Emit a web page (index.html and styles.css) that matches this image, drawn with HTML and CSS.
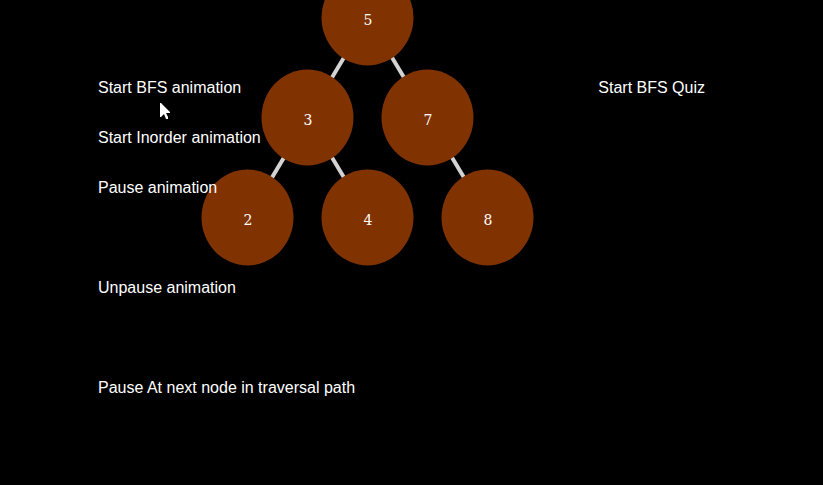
FILE: index.html
```html
<!DOCTYPE html>
<html lang="en">
<head>
<meta charset="utf-8">
<title>Tree traversal</title>
<link rel="stylesheet" href="styles.css">
</head>
<body>
<main class="stage">
  <svg class="tree" width="560" height="280" role="img" aria-label="Binary search tree">
    <g class="edges">
      <line x1="368" y1="17.5" x2="308" y2="117.5"/>
      <line x1="368" y1="17.5" x2="428" y2="117.5"/>
      <line x1="308" y1="117.5" x2="248" y2="217.5"/>
      <line x1="308" y1="117.5" x2="368" y2="217.5"/>
      <line x1="428" y1="117.5" x2="488" y2="217.5"/>
    </g>
    <g class="nodes">
      <ellipse cx="367.5" cy="17.5" rx="46" ry="48"/>
      <ellipse cx="307.5" cy="117.5" rx="46" ry="48"/>
      <ellipse cx="427.5" cy="117.5" rx="46" ry="48"/>
      <ellipse cx="247.5" cy="217.5" rx="46" ry="48"/>
      <ellipse cx="367.5" cy="217.5" rx="46" ry="48"/>
      <ellipse cx="487.5" cy="217.5" rx="46" ry="48"/>
    </g>
    <g class="keys">
      <text x="368" y="25">5</text>
      <text x="308" y="125">3</text>
      <text x="428" y="125">7</text>
      <text x="248" y="225">2</text>
      <text x="368" y="225">4</text>
      <text x="488" y="225">8</text>
    </g>
  </svg>
  <div class="controls">
    <div class="group">
      <button type="button">Start BFS animation</button>
      <button type="button">Start Inorder animation</button>
      <button type="button">Pause animation</button>
      <button type="button" class="spaced">Unpause animation</button>
      <button type="button" class="spaced">Pause At next node in traversal path</button>
    </div>
    <div class="group">
      <button type="button">Start BFS Quiz</button>
    </div>
  </div>
  <svg class="pointer" width="12" height="18" viewBox="0 0 12 18" aria-hidden="true">
    <path d="M0 0V14H1L4 11L6 16H8V14L6 10H10V9L1 0Z"/>
  </svg>
</main>
</body>
</html>
```
FILE: styles.css
```css
body {
  margin: 0;
  background: #000;
  color: #fff;
  font-family: "Liberation Sans", Arial, sans-serif;
}

.stage {
  position: relative;
  min-height: 100vh;
  overflow: hidden;
}

.tree {
  position: absolute;
  top: 0;
  left: 0;
}

.edges {
  stroke: #d3d3d3;
  stroke-width: 4;
}

.nodes {
  fill: #803300;
}

.keys {
  fill: #fff;
  font-family: "DejaVu Serif", "Courier New", serif;
  font-size: 14px;
  text-anchor: middle;
}

.controls {
  position: relative;
  display: flex;
  justify-content: space-between;
  padding: 78px 118px 0 98px;
}

.group {
  display: flex;
  flex-direction: column;
  align-items: flex-start;
  gap: 30px;
}

.group button {
  margin: 0;
  padding: 0;
  border: 0;
  background: none;
  color: inherit;
  font-family: inherit;
  font-size: 16px;
  line-height: 20px;
  cursor: pointer;
}

.group .spaced {
  margin-top: 50px;
}

.pointer {
  position: absolute;
  top: 103px;
  left: 160px;
  fill: #fff;
}
```
